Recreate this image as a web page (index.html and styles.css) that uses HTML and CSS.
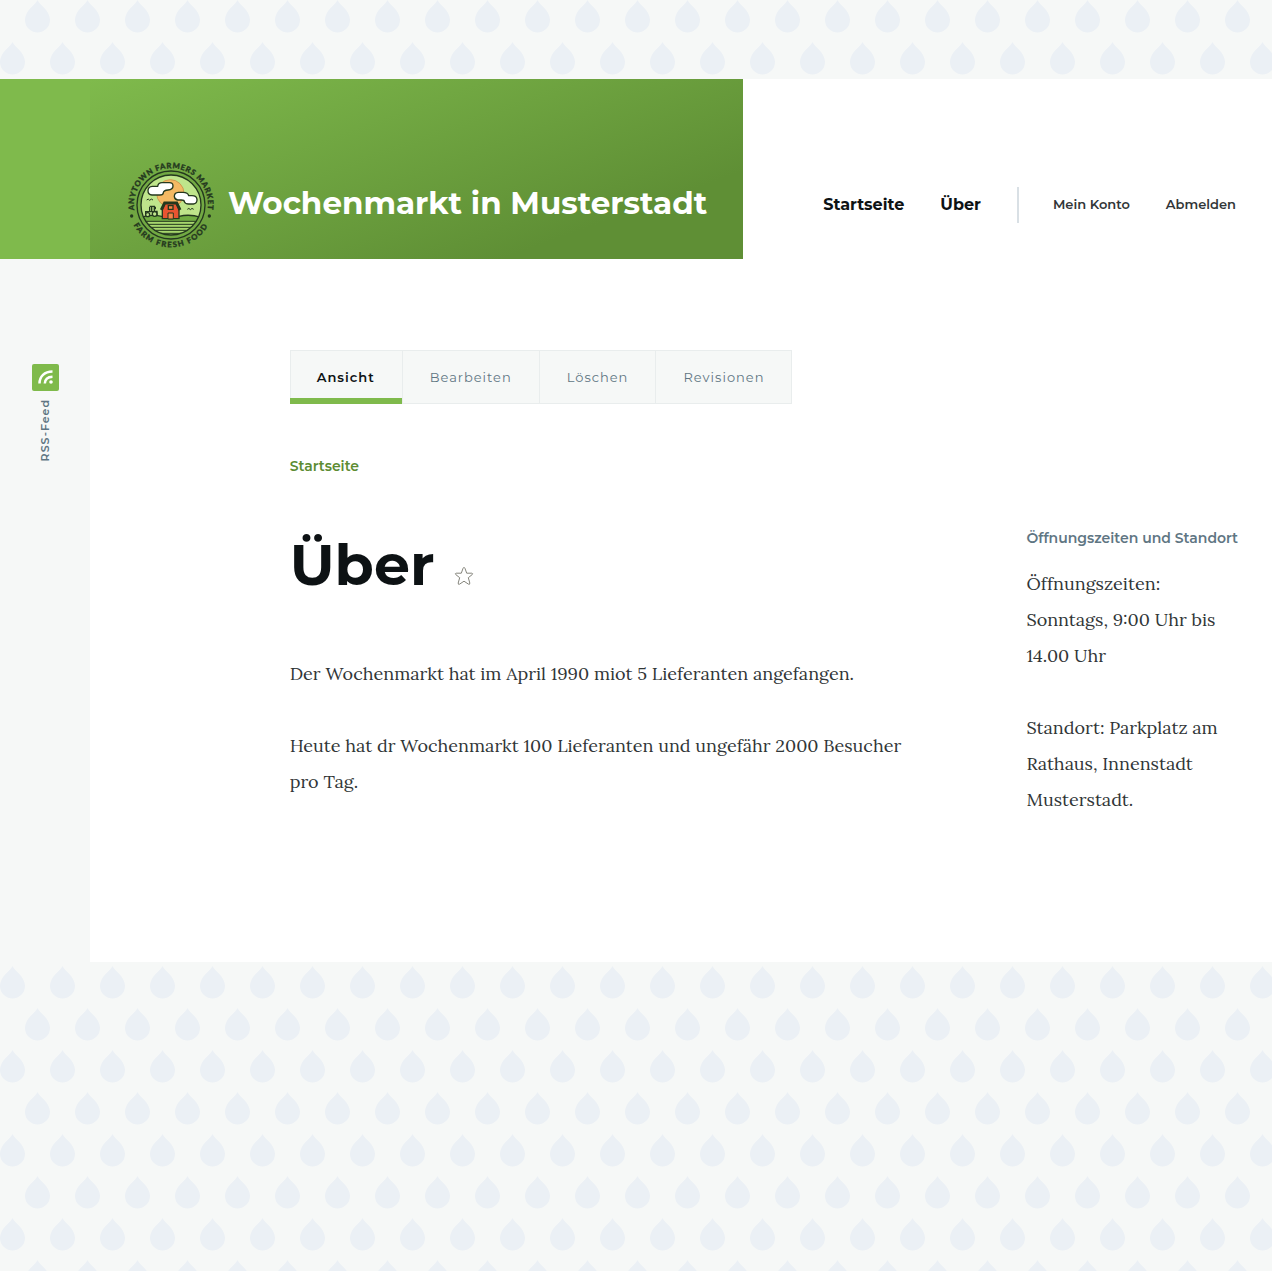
FILE: index.html
```html
<!DOCTYPE html>
<html lang="de">
<head>
<meta charset="utf-8">
<meta name="viewport" content="width=device-width, initial-scale=1">
<title>Über | Wochenmarkt in Musterstadt</title>
<link rel="stylesheet" href="styles.css">
</head>
<body>
<div class="page">
  <header class="header">
    <div class="header-edge"></div>
    <a class="branding" href="#">
      <svg class="logo" viewBox="0 0 258 258" aria-hidden="true">
        <defs>
          <path id="arc-top" d="M20.200 151.600 A111 111 0 1 1 237.800 151.600"/>
          <path id="arc-bottom" d="M2 129 A127 127 0 0 0 256 129"/>
          <clipPath id="disc"><circle cx="129" cy="129" r="90"/></clipPath>
        </defs>
        <circle cx="129" cy="129" r="102" fill="#72a943" stroke="#24381e" stroke-width="4"/>
        <circle cx="129" cy="129" r="90" fill="#bfe58b"/>
        <g clip-path="url(#disc)">
          <circle cx="127" cy="94" r="41" fill="#f4b963" stroke="#ce9950" stroke-width="3"/>
          <path d="M30 170 Q62 154 105 164 Q129 171 153 163 Q190 154 230 170 V230 H30Z" fill="#72ad43" stroke="#24381e" stroke-width="4"/>
          <path d="M30 178H230V230H30Z" fill="#a7d66d"/>
          <path d="M35 178H225M38 187H220M42 196H216M48 205H210M66 214H192" stroke="#24381e" stroke-width="3"/>
        </g>
        <circle cx="129" cy="129" r="90" fill="none" stroke="#24381e" stroke-width="4"/>
        <g fill="#fff" stroke="#24381e" stroke-width="4" stroke-linejoin="round">
          <path d="M72 99H96Q106 99 106 92Q107 85 120 84Q135 83 135 72Q135 61 122 62H102Q91 62 89 73H73Q60 74 60 86Q60 98 72 99Z"/>
          <path d="M149 114H160Q169 114 169 119Q171 126 182 126H196Q208 124 207 112Q206 101 192 101H182Q180 91 165 91H151Q139 92 139 103Q140 113 149 114Z"/>
        </g>
        <path d="M103 170V142L110 124H146L153 142V170Z" fill="#e95431" stroke="#24381e" stroke-width="4"/>
        <path d="M100 144L110 123H146L156 144" fill="none" stroke="#24381e" stroke-width="9"/>
        <path d="M120 171V153H136V171Z" fill="#f58446" stroke="#24381e" stroke-width="3"/>
        <path d="M121 131H135V142H121Z" fill="#f58446" stroke="#24381e" stroke-width="4"/>
        <g fill="none" stroke="#24381e" stroke-width="4">
          <path d="M65 135V149H53V158M65 133H79V148H87V159M71 135V148M82 142V134M56 149H86"/>
          <circle cx="59" cy="158" r="6" fill="#bfe58b"/><circle cx="80" cy="156" r="7" fill="#bfe58b"/>
          <path d="M56 114Q61 108 65 115Q70 108 75 114M178 142Q183 136 187 143Q192 136 197 142" stroke-width="3"/>
        </g>
        <circle cx="11" cy="162" r="5" fill="#24381e"/><circle cx="244" cy="162" r="5" fill="#24381e"/>
        <g class="logo-text">
          <text><textPath href="#arc-top" startOffset="50%">ANYTOWN FARMERS MARKET</textPath></text>
          <text class="logo-text-low"><textPath href="#arc-bottom" startOffset="50%">FARM FRESH FOOD</textPath></text>
        </g>
      </svg>
      <span class="site-name">Wochenmarkt in Musterstadt</span>
    </a>
    <div class="navigation">
      <nav class="primary-nav" aria-label="Hauptnavigation">
        <a href="#">Startseite</a>
        <a href="#">Über</a>
      </nav>
      <nav class="account-nav" aria-label="Benutzermenü">
        <a href="#">Mein Konto</a>
        <a href="#">Abmelden</a>
      </nav>
    </div>
  </header>

  <div class="body">
    <aside class="social">
      <a class="rss" href="#">
        <svg viewBox="0 0 27 27" aria-hidden="true">
          <rect width="27" height="27" rx="2" fill="#7fba4b"/>
          <g fill="none" stroke="#fff" stroke-width="2.500">
            <path d="M7.500 19.500C7.500 12.500 12.500 7.500 20.500 7.500"/>
            <path d="M12.800 19.500C13 15.500 15.500 13 20.500 12.800"/>
          </g>
          <circle cx="19" cy="18" r="1.800" fill="#fff"/>
        </svg>
        <span class="rss-label">RSS-Feed</span>
      </a>
    </aside>

    <div class="layout">
      <nav class="tabs" aria-label="Reiter">
        <a class="tab tab-active" href="#" aria-current="page">Ansicht</a>
        <a class="tab" href="#">Bearbeiten</a>
        <a class="tab" href="#">Löschen</a>
        <a class="tab" href="#">Revisionen</a>
      </nav>
      <nav class="breadcrumb" aria-label="Pfadnavigation">
        <a href="#">Startseite</a>
      </nav>
      <main class="content">
        <div class="title-row">
          <h1>Über</h1>
          <a class="shortcut" href="#" aria-label="Zu Verknüpfungen hinzufügen">
            <svg viewBox="0 0 20 20" aria-hidden="true">
              <path d="M10 1.500Q10.700 1.500 11 2.400L12.700 7.200H17.800Q19.300 7.500 18.200 8.600L14.300 11.700L15.800 17Q15.900 18.900 14.500 18.200L10 15.200L5.500 18.200Q4.100 18.900 4.200 17L5.700 11.700L1.800 8.600Q.7 7.500 2.200 7.200H7.300L9 2.400Q9.300 1.500 10 1.500Z" fill="#fff" stroke="#85857c"/>
            </svg>
          </a>
        </div>
        <div class="text">
          <p>Der Wochenmarkt hat im April 1990 miot 5 Lieferanten angefangen.</p>
          <p>Heute hat dr Wochenmarkt 100 Lieferanten und ungefähr 2000 Besucher pro Tag.</p>
        </div>
      </main>
      <aside class="sidebar">
        <h2>Öffnungszeiten und Standort</h2>
        <div class="text">
          <p>Öffnungszeiten: Sonntags, 9:00 Uhr bis 14.00 Uhr</p>
          <p>Standort: Parkplatz am Rathaus, Innenstadt Musterstadt.</p>
        </div>
      </aside>
    </div>
  </div>
</div>
</body>
</html>
```
FILE: styles.css
```css
* { box-sizing: border-box; }

body {
  margin: 0;
  min-height: 100vh;
  background: #f6f8f7 url("data:image/svg+xml,%3Csvg xmlns='http://www.w3.org/2000/svg' width='50' height='84'%3E%3Cg fill='%23ebf0f5'%3E%3Cpath d='M37.500 0C38.500 4 50 10 50 20A12.500 12.500 0 0 1 25 20C25 10 36.500 4 37.500 0Z'/%3E%3Cpath d='M12.500 42C13.500 46 25 52 25 62A12.500 12.500 0 0 1 0 62C0 52 11.500 46 12.500 42Z'/%3E%3C/g%3E%3C/svg%3E");
  color: #0d1214;
  font-family: Metropolis, Montserrat, Inter, sans-serif;
}

a { color: inherit; text-decoration: none; }
h1, h2, p { margin: 0; }

.page { padding-top: 79px; }

.header {
  display: flex;
  min-height: 180px;
  background: #fff;
}

.header-edge { flex: 0 0 90px; background: #7fba4c; }

.branding {
  display: flex;
  align-items: flex-end;
  gap: 14px;
  padding: 36px 36px 11px 38px;
  background: linear-gradient(160deg, #7fba4c 0%, #5f8f35 79%);
  color: #fff;
}

.logo { flex: none; width: 86px; height: 86px; overflow: visible; }

.logo-text {
  fill: #24381e;
  stroke: #24381e;
  font-family: Lato, sans-serif;
  font-size: 23px;
  font-weight: 900;
  letter-spacing: 2px;
  text-anchor: middle;
}

.logo-text-low { letter-spacing: 4px; }

.site-name {
  padding-bottom: 27px;
  font-size: 31px;
  font-weight: 700;
  line-height: 36px;
  white-space: nowrap;
}

.navigation {
  display: flex;
  flex: 1;
  align-items: flex-end;
  justify-content: flex-end;
  padding: 0 36px;
  margin-bottom: 36px;
}

.primary-nav, .account-nav {
  display: flex;
  align-items: center;
  gap: 36px;
  height: 36px;
  padding-bottom: 2px;
  white-space: nowrap;
}

.primary-nav { padding-right: 36px; font-size: 16px; font-weight: 700; }

.account-nav {
  padding-left: 34px;
  border-left: 2px solid #d9e0e5;
  color: #313637;
  font-size: 13px;
  font-weight: 600;
}

.body { display: flex; }

.social {
  display: flex;
  flex: 0 0 90px;
  justify-content: center;
  padding-top: 105px;
  background: #f6f8f7;
}

.rss {
  display: flex;
  flex-direction: column;
  align-items: center;
  align-self: flex-start;
  gap: 8px;
}

.rss svg { width: 27px; height: 27px; }

.rss-label {
  color: #5f7683;
  font-size: 11px;
  font-weight: 600;
  line-height: 18px;
  letter-spacing: 1px;
  writing-mode: vertical-rl;
  transform: rotate(180deg);
}

.layout {
  display: grid;
  flex: 1;
  grid-template-columns: repeat(14, minmax(0, 1fr));
  column-gap: 36px;
  align-content: start;
  padding: 91px 36px 144px;
  background: #fff;
}

.tabs {
  display: flex;
  grid-column: 3 / -1;
  justify-self: start;
  border: 1px solid #e9eded;
  background: #f6f8f7;
}

.tab {
  padding: 0 27px;
  border-right: 1px solid #e9eded;
  color: #5f7683;
  font-size: 13px;
  line-height: 52px;
  letter-spacing: 1px;
}

.tab:last-child { border-right: 0; }

.tab-active {
  margin: 0 0 -1px -1px;
  box-shadow: inset 0 -6px #7fba4c;
  color: #0d1214;
  font-weight: 600;
}

.breadcrumb {
  grid-column: 3 / -1;
  margin-top: 53px;
  color: #5c8c32;
  font-size: 14px;
  font-weight: 600;
  line-height: 18px;
}

.content { grid-column: 3 / 11; margin-top: 54px; }

.title-row { display: flex; align-items: center; gap: 20px; }

h1 { font-size: 57px; font-weight: 700; line-height: 72px; }

.shortcut { display: flex; padding-top: 22px; }
.shortcut svg { width: 20px; height: 20px; }

.text {
  color: #313637;
  font-family: Lora, "Liberation Serif", serif;
  font-size: 18px;
  line-height: 36px;
}

.text p + p { margin-top: 36px; }

.content .text { margin-top: 55px; }

.sidebar { grid-column: 12 / -1; margin-top: 54px; }

h2 {
  margin-bottom: 19px;
  color: #5f7683;
  font-size: 14px;
  font-weight: 600;
  line-height: 18px;
  white-space: nowrap;
}
```
